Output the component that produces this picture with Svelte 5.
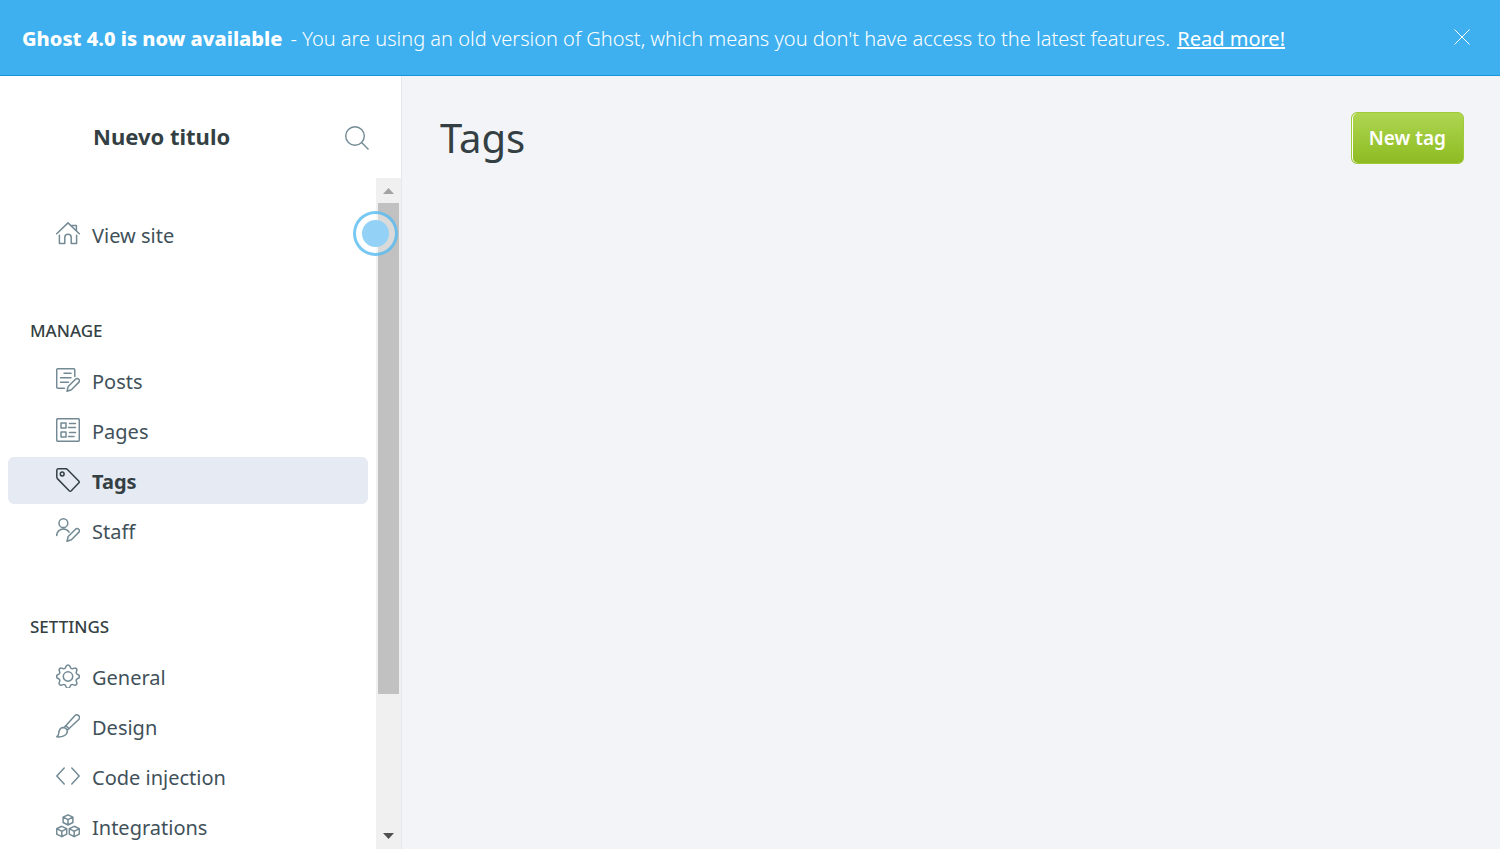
<script>
  const sections = [
    { title: '', items: [{ label: 'View site', icon: 'house' }] },
    {
      title: 'Manage',
      items: [
        { label: 'Posts', icon: 'posts' },
        { label: 'Pages', icon: 'pages' },
        { label: 'Tags', icon: 'tag', active: true },
        { label: 'Staff', icon: 'staff' }
      ]
    },
    {
      title: 'Settings',
      items: [
        { label: 'General', icon: 'gear' },
        { label: 'Design', icon: 'brush' },
        { label: 'Code injection', icon: 'code' },
        { label: 'Integrations', icon: 'boxes' }
      ]
    }
  ];

  const icons = {
    house: 'M.7 11.8 12 .9l11.3 10.9M3.4 13.2v8.2h5.4v-6a3.2 3.2 0 0 1 6.4 0v6h5.4v-8.2M15.6 3.4h4.800v5',
    posts: 'M8.5 20.3H2a1.3 1.3 0 0 1-1.3-1.3V2A1.3 1.3 0 0 1 2 .7h15.500A1.3 1.3 0 0 1 18.800 2v6.500M8 5.2h7M4.500 9.800H15M4.500 14.300h8M11 23.300l1.200-4.800 7.300-7.300a2.200 2.200 0 0 1 3.200 3.200l-7.300 7.300z',
    pages: 'M2 .7h20A1.300 1.300 0 0 1 23.300 2v20a1.300 1.300 0 0 1-1.300 1.300H2A1.300 1.300 0 0 1 .7 22V2A1.300 1.300 0 0 1 2 .7zM5 5h5v5H5zM5 14h5v5H5zM13.500 5.500h6M12.500 9.500h7M13.500 14.500h6M12.500 18.500h5.500',
    tag: 'M.8 2.300v6.800c0 .6.200 1.100.6 1.500l11.800 12.100a1.500 1.500 0 0 0 2.100 0l7.400-7.600a1.500 1.500 0 0 0 0-2.100L11.400 1.400A2 2 0 0 0 10 .8H2.300A1.500 1.500 0 0 0 .8 2.300zM8.100 6a1.900 1.900 0 1 1-3.800 0 1.900 1.900 0 0 1 3.800 0z',
    staff: 'M11.800 5.200a4.400 4.400 0 1 1-8.800 0 4.400 4.400 0 0 1 8.800 0zM.7 17.500c0-3.600 3-6.500 6.700-6.500 2.400 0 4.600 1.300 5.700 3.200M11 23.300l1.200-4.800 7.300-7.300a2.200 2.200 0 0 1 3.200 3.200l-7.300 7.300z',
    gear: 'M10.200 2.100a2 2 0 0 1 3.600 0l.6 1.400a2 2 0 0 0 2.500 1.100l1.400-.5a2 2 0 0 1 2.500 2.500l-.5 1.400a2 2 0 0 0 1.100 2.400l.9.400a1.900 1.900 0 0 1 0 3.500l-.9.400a2 2 0 0 0-1.100 2.500l.5 1.300a2 2 0 0 1-2.500 2.600l-1.400-.5a2 2 0 0 0-2.500 1l-.6 1.400a2 2 0 0 1-3.600 0L9.600 21.600a2 2 0 0 0-2.500-1l-1.400.5a2 2 0 0 1-2.500-2.600l.5-1.300a2 2 0 0 0-1.100-2.500l-.9-.4a1.900 1.900 0 0 1 0-3.500l.9-.4A2 2 0 0 0 3.700 8l-.5-1.400a2 2 0 0 1 2.500-2.500l1.400.5a2 2 0 0 0 2.500-1.100zM16.700 12.500a4.700 4.700 0 1 1-9.400 0 4.700 4.700 0 0 1 9.400 0z',
    brush: 'M8.200 13.500 18.800 1.700a2.700 2.700 0 0 1 3.900 3.800L11.200 16.300M7.200 13.400a4.800 4.800 0 0 1 4.200 4.100c-.5 4-5.500 6-10.600 5.200 2.200-1.500 1.700-3 2.300-5.400.5-2.300 2-3.800 4.100-3.900zM9.800 11.600l3.300 3.200',
    code: 'M8.200 4 .8 12l7.400 8M15.800 4l7.400 8-7.400 8',
    boxes: 'M12 .8l4.900 2.400v5.300L12 11 7.100 8.500V3.200zM7.100 3.200 12 5.700l4.900-2.500M12 5.700V11M5.800 12.300l4.900 2.400v5.400l-4.900 2.600-5.100-2.600v-5.400zM.7 14.700l5.100 2.600 4.900-2.600M5.800 17.300v5.400M18.200 12.300l5.100 2.400v5.400l-5.100 2.600-4.900-2.600v-5.400zM13.300 14.700l4.900 2.600 5.100-2.600M18.200 17.300v5.400'
  };
</script>

<div class="app">
  <aside class="banner">
    <p><strong>Ghost 4.0 is now available</strong> - You are using an old version of Ghost, which means you don't have access to the latest features. <a href="#read-more">Read more!</a></p>
    <button class="close" aria-label="Close">
      <svg viewBox="0 0 16 16" width="16" height="16"><path d="M.5.5l15 15M15.500.5l-15 15" /></svg>
    </button>
  </aside>

  <div class="viewport">
    <div class="sidebar">
      <header>
        <h2>Nuevo titulo</h2>
        <button class="search" aria-label="Search">
          <svg viewBox="0 0 24 24" width="24" height="24"><circle cx="10" cy="10" r="9.300" /><path d="M16.600 16.600l6.900 6.900" /></svg>
        </button>
      </header>
      <div class="scroller">
        <nav>
          {#each sections as section}
            <section>
              {#if section.title}<h3>{section.title}</h3>{/if}
              <ul>
                {#each section.items as item}
                  <li>
                    <a href="#{item.icon}" class:active={item.active}>
                      <svg viewBox="0 0 24 24" width="24" height="24"><path d={icons[item.icon]} /></svg>
                      <span>{item.label}</span>
                    </a>
                  </li>
                {/each}
              </ul>
            </section>
          {/each}
        </nav>
        <div class="scrollbar" aria-hidden="true">
          <svg viewBox="0 0 11 6" width="11" height="6"><path d="M0 6 5.500 0 11 6z" fill="#a3a3a3" /></svg>
          <div class="track"><div class="thumb"></div></div>
          <svg viewBox="0 0 11 6" width="11" height="6"><path d="M0 0h11L5.500 6z" fill="#505050" /></svg>
        </div>
        <span class="beacon"></span>
      </div>
    </div>

    <main>
      <h1>Tags</h1>
      <button class="new">New tag</button>
    </main>
  </div>
</div>

<style>
  :global(body) {
    margin: 0;
  }
  .app {
    display: flex;
    flex-direction: column;
    height: 100vh;
    overflow: hidden;
    font-family: "Noto Sans", "Open Sans", sans-serif;
    color: #343f44;
  }
  h1, h2, h3, p, ul {
    margin: 0;
    padding: 0;
  }
  ul {
    list-style: none;
  }
  button {
    font: inherit;
    border: 0;
    padding: 0;
    background: none;
  }
  svg {
    display: block;
    fill: none;
    flex: none;
  }
  .banner {
    display: flex;
    align-items: center;
    justify-content: space-between;
    box-sizing: border-box;
    flex: none;
    min-height: 76px;
    padding: 0 30px 0 22px;
    background: #3eb0ef;
    border-bottom: 1px solid #1b95da;
    color: #fff;
    font-size: 20px;
    font-weight: 300;
  }
  .banner p {
    padding-top: 2px;
  }
  .banner strong {
    margin-right: 3px;
    font-weight: 800;
  }
  .banner a {
    margin-left: 2px;
    color: #fff;
    font-weight: 400;
  }
  .close {
    padding-bottom: 2px;
  }
  .close svg {
    stroke: #fff;
    stroke-width: 1;
  }
  .viewport {
    display: flex;
    flex: 1;
    min-height: 0;
  }
  .sidebar {
    display: flex;
    flex-direction: column;
    flex: none;
    box-sizing: border-box;
    width: 402px;
    border-right: 1px solid #e3e7ee;
    background: #fff;
  }
  .sidebar header {
    display: flex;
    align-items: center;
    justify-content: space-between;
    box-sizing: border-box;
    min-height: 102px;
    padding: 22px 32px 0 93px;
  }
  h2 {
    padding-bottom: 4px;
    font-size: 22px;
    line-height: 30px;
    font-weight: 700;
  }
  .search svg {
    stroke: #738a94;
    stroke-width: 1.4;
  }
  .scroller {
    position: relative;
    display: flex;
    flex: 1;
    min-height: 0;
  }
  nav {
    flex: 1;
    overflow: hidden;
    padding: 33px 8px 0;
  }
  section {
    margin-bottom: 58px;
  }
  h3 {
    padding: 0 22px;
    margin-bottom: 14px;
    font-size: 17px;
    line-height: 24px;
    font-weight: 500;
    text-transform: uppercase;
  }
  li {
    padding-bottom: 3px;
  }
  li a {
    display: flex;
    align-items: center;
    gap: 12px;
    height: 47px;
    padding-left: 48px;
    border-radius: 6px;
    color: #41515a;
    font-size: 20px;
    text-decoration: none;
  }
  li span {
    padding-top: 2px;
  }
  li svg {
    margin-bottom: 2px;
    stroke: #738a94;
    stroke-width: 1.5;
    stroke-linejoin: round;
    stroke-linecap: round;
  }
  li a.active {
    background: #e5eaf3;
    color: #343f44;
    font-weight: 700;
  }
  li a.active svg {
    stroke: #343f44;
  }
  .scrollbar {
    display: flex;
    flex-direction: column;
    align-items: center;
    gap: 9px;
    box-sizing: border-box;
    width: 25px;
    padding: 10px 0;
    background: #f0f0f0;
  }
  .track {
    flex: 1;
    width: 21px;
  }
  .thumb {
    height: 79%;
    background: #c1c1c1;
  }
  .beacon {
    position: absolute;
    top: 33px;
    right: 3px;
    width: 45px;
    height: 45px;
    box-sizing: border-box;
    border: 3px solid rgba(62, 176, 239, 0.7);
    border-radius: 50%;
    background: radial-gradient(circle, #93d2f6 0 13px, rgba(255, 255, 255, 0.4) 14px);
  }
  main {
    display: flex;
    flex: 1;
    align-items: flex-start;
    justify-content: space-between;
    padding: 36px 36px 0 38px;
    background: #f2f4f8;
  }
  h1 {
    font-size: 40px;
    line-height: 52px;
    font-weight: 400;
  }
  .new {
    box-sizing: border-box;
    min-height: 52px;
    padding: 0 17px;
    border: 1px solid #9fcb3b;
    border-radius: 6px;
    background: linear-gradient(#aed651, #8ebb22);
    box-shadow: inset 1px 0 0 #fff;
    color: #fff;
    font-size: 19px;
    font-weight: 600;
  }
</style>
